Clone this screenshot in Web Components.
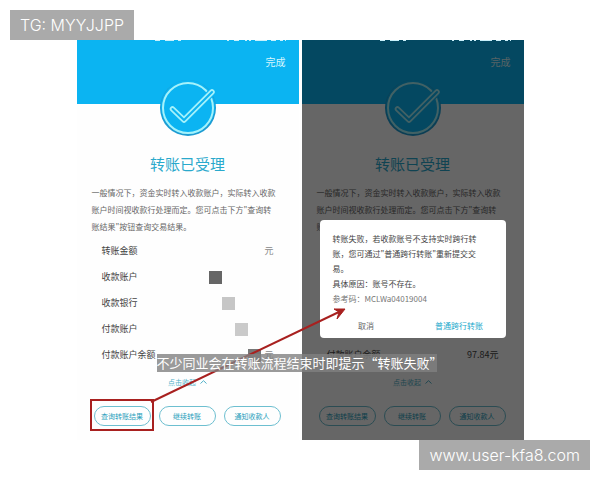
<!DOCTYPE html>
<html lang="zh-CN">
<head>
<meta charset="utf-8">
<meta name="viewport" content="width=device-width, initial-scale=1">
<title>转账已受理</title>
<style>
  body {
    margin: 0;
    background: #fff;
    font-family: "Liberation Sans", "Noto Sans CJK SC", sans-serif;
  }
</style>
</head>
<body>
<transfer-guide></transfer-guide>

<script>
/**
 * Creates a template element.
 *
 * @param {string} html - The markup and styles of the component.
 * @returns {HTMLTemplateElement} The template.
 */
const createTemplate = html => {
  const template = document.createElement('template')
  template.innerHTML = html
  return template
}

const tagTemplate = createTemplate(`
  <style>
    :host {
      display: block;
      margin: 0 10px;
      padding: 0 10px;
      background: #aaa;
      color: #fff;
      font: 300 16px/30px Inter, sans-serif;
      white-space: nowrap;
    }
  </style>
  <slot></slot>
`)

customElements.define('contact-tag',
  /**
   * Represents a contact-tag element.
   */
  class extends HTMLElement {
    /**
     * Creates an instance of the current type.
     */
    constructor () {
      super()
      this.attachShadow({ mode: 'open' }).appendChild(tagTemplate.content.cloneNode(true))
    }
  }
)

const badgeTemplate = createTemplate(`
  <style>
    :host {
      display: block;
      width: 60px;
      height: 60px;
    }
    svg {
      display: block;
    }
  </style>
  <svg width="60" height="60" viewBox="0 0 60 60" fill="none" stroke-linecap="round" stroke-linejoin="round" aria-hidden="true">
    <circle cx="30" cy="30" r="28" fill="#1e9cd2"/>
    <circle cx="30" cy="29" r="27" fill="#0bb4f2"/>
    <circle cx="30" cy="30" r="25" stroke="#a5f2fb" stroke-width="2"/>
    <path d="M46 22 54 14" stroke="#0bb4f2" stroke-width="8"/>
    <path d="M14.500 31 26 42 54 14" stroke="#a5f2fb" stroke-width="5.500"/>
    <path d="M14.500 31 26 42 54 14" stroke="#0bb4f2" stroke-width="2"/>
  </svg>
`)

customElements.define('check-badge',
  /**
   * Represents a check-badge element.
   */
  class extends HTMLElement {
    /**
     * Creates an instance of the current type.
     */
    constructor () {
      super()
      this.attachShadow({ mode: 'open' }).appendChild(badgeTemplate.content.cloneNode(true))
    }
  }
)

const rowTemplate = createTemplate(`
  <style>
    :host {
      display: flex;
      align-items: center;
      height: 26px;
      font-size: 9px;
      line-height: 26px;
      color: #444;
    }
    .label {
      flex: 1;
    }
    .value {
      color: var(--value-color, #888);
    }
    .mask {
      width: 13px;
      height: 13px;
      margin-right: var(--mask-gap, 0);
      background: var(--mask-color, transparent);
    }
  </style>
  <span class="label"><slot></slot></span>
  <span class="mask"></span>
  <span class="value"><slot name="value"></slot></span>
`)

customElements.define('detail-row',
  /**
   * Represents a detail-row element.
   */
  class extends HTMLElement {
    /**
     * Creates an instance of the current type.
     */
    constructor () {
      super()
      this.attachShadow({ mode: 'open' }).appendChild(rowTemplate.content.cloneNode(true))
    }
  }
)

const pillTemplate = createTemplate(`
  <style>
    :host {
      display: block;
      flex: 1;
    }
    button {
      box-sizing: border-box;
      width: 100%;
      height: 20px;
      padding: 0;
      border: 1px solid #6dbfd0;
      border-radius: 10px;
      background: none;
      color: #2a9fbc;
      font: 7px/18px "Noto Sans CJK SC", sans-serif;
      white-space: nowrap;
    }
  </style>
  <button type="button"><slot></slot></button>
`)

customElements.define('pill-button',
  /**
   * Represents a pill-button element.
   */
  class extends HTMLElement {
    /**
     * Creates an instance of the current type.
     */
    constructor () {
      super()
      this.attachShadow({ mode: 'open' }).appendChild(pillTemplate.content.cloneNode(true))
    }
  }
)

const phoneTemplate = createTemplate(`
  <style>
    :host {
      display: block;
      position: relative;
      padding-bottom: 14px;
      background: #fefefe;
      font-family: "Noto Sans CJK SC", sans-serif;
    }
    header {
      display: flex;
      flex-direction: column;
      align-items: flex-end;
      height: 64px;
      background: #0bb4f2;
    }
    .status {
      display: block;
      position: relative;
      z-index: 1;
      margin-right: 12px;
    }
    button {
      padding: 0;
      border: 0;
      background: none;
      font-family: inherit;
    }
    .done {
      margin: 12px 13px 0;
      color: #d8f6fd;
      font-size: 10px;
      line-height: 16px;
    }
    check-badge {
      margin: -26px auto 0;
    }
    h1 {
      margin: 15px 0 0;
      color: #2aa9cc;
      font-size: 15px;
      font-weight: 400;
      line-height: 22px;
      text-align: center;
    }
    p {
      margin: 9px 0 3px;
      color: #666;
      font-size: 8px;
      line-height: 17px;
      padding-left: 15px;
      white-space: nowrap;
    }
    .rows {
      padding: 0 25px;
    }
    .fold {
      display: flex;
      align-items: center;
      gap: 4px;
      margin: 8px auto 12px;
      color: #4fb0c8;
      font-size: 7px;
      line-height: 12px;
    }
    .actions {
      display: flex;
      gap: 8px;
      padding: 0 18px 0 17px;
    }
    .shade {
      display: none;
    }
    :host([dimmed]) .shade {
      display: flex;
      align-items: flex-start;
      position: absolute;
      inset: 0;
      padding: 180px 18px 0;
      background: rgba(0, 0, 0, .6);
    }
  </style>
  <header>
    <svg class="status" width="134" height="2" viewBox="0 0 134 2" stroke="#c9f1fc" stroke-width="2" aria-hidden="true">
      <path d="M2 0h5M12 0h9M25 0h3M74 0h2M81 0h5M92 0h2M96 0h2M102 0h12M118 0h5M127 0h3M132 0h1"/>
    </svg>
    <button class="done" type="button">完成</button>
  </header>
  <check-badge></check-badge>
  <h1>转账已受理</h1>
  <p>一般情况下，资金实时转入收款账户，实际转入收款<br>账户时间视收款行处理而定。您可点击下方"查询转<br><slot name="last-line">账结果"按钮查询交易结果。</slot></p>
  <div class="rows"><slot></slot></div>
  <button class="fold" type="button">点击收起
    <svg width="7" height="4" viewBox="0 0 7 4" fill="none" stroke="currentColor" aria-hidden="true"><path d="M.5 3.500 3.500.7 6.500 3.500"/></svg>
  </button>
  <div class="actions">
    <pill-button>查询转账结果</pill-button>
    <pill-button>继续转账</pill-button>
    <pill-button>通知收款人</pill-button>
  </div>
  <div class="shade"><slot name="dialog"></slot></div>
`)

customElements.define('phone-screen',
  /**
   * Represents a phone-screen element.
   */
  class extends HTMLElement {
    /**
     * Creates an instance of the current type.
     */
    constructor () {
      super()
      this.attachShadow({ mode: 'open' }).appendChild(phoneTemplate.content.cloneNode(true))
    }
  }
)

const dialogTemplate = createTemplate(`
  <style>
    :host {
      display: block;
      flex: 1;
      background: #fff;
      border-radius: 4px;
      color: #444;
      font-size: 8px;
      line-height: 15px;
      white-space: nowrap;
    }
    .message {
      padding: 11px 13px 0;
    }
    .code {
      color: #777;
    }
    .buttons {
      display: grid;
      grid-template-columns: 1fr 1fr;
      padding: 7px 0 1px;
    }
    button {
      height: 24px;
      padding: 0;
      border: 0;
      background: none;
      color: #666;
      font: inherit;
    }
    .primary {
      color: #1ca9cc;
    }
  </style>
  <div class="message" role="alertdialog">
    <div>转账失败，若收款账号不支持实时跨行转<br>账，您可通过"普通跨行转账"重新提交交<br>易。</div>
    <div>具体原因：账号不存在。</div>
    <div class="code">参考码：MCLWa04019004</div>
  </div>
  <div class="buttons">
    <button type="button">取消</button>
    <button class="primary" type="button">普通跨行转账</button>
  </div>
`)

customElements.define('failure-dialog',
  /**
   * Represents a failure-dialog element.
   */
  class extends HTMLElement {
    /**
     * Creates an instance of the current type.
     */
    constructor () {
      super()
      this.attachShadow({ mode: 'open' }).appendChild(dialogTemplate.content.cloneNode(true))
    }
  }
)

const guideTemplate = createTemplate(`
  <style>
    :host {
      display: flex;
      flex-direction: column;
      padding: 10px 0;
    }
    .top {
      align-self: flex-start;
    }
    .bottom {
      align-self: flex-end;
    }
    figure {
      position: relative;
      display: grid;
      grid-template-columns: 1fr 1fr;
      gap: 3px;
      width: 100%;
      max-width: 447px;
      margin: 0 auto;
    }
    .marks {
      position: absolute;
      inset: 0;
      width: 100%;
      height: 100%;
      z-index: 1;
    }
    /* The caption lies across both screens */
    figcaption {
      position: absolute;
      z-index: 1;
      top: 314px;
      left: 80px;
      width: 280px;
      background: rgba(129, 129, 129, .8);
      color: #fff;
      font: 13px/18px "Noto Sans CJK SC", sans-serif;
      white-space: nowrap;
    }
  </style>
  <contact-tag class="top">TG: MYYJJPP</contact-tag>
  <figure>
    <phone-screen>
      <detail-row>转账金额<span slot="value">元</span></detail-row>
      <detail-row style="--mask-color: #666; --mask-gap: 52px">收款账户</detail-row>
      <detail-row style="--mask-color: #c6c6c6; --mask-gap: 39px">收款银行</detail-row>
      <detail-row style="--mask-color: #cacaca; --mask-gap: 26px">付款账户</detail-row>
      <detail-row style="--mask-color: #777; --mask-gap: 3px">付款账户余额<span slot="value">元</span></detail-row>
    </phone-screen>
    <phone-screen dimmed>
      <span slot="last-line">账</span>
      <detail-row></detail-row>
      <detail-row></detail-row>
      <detail-row></detail-row>
      <detail-row></detail-row>
      <detail-row style="--value-color: #444">付款账户余额<span slot="value">97.84元</span></detail-row>
      <failure-dialog slot="dialog"></failure-dialog>
    </phone-screen>
    <svg class="marks" viewBox="0 0 447 400" fill="none" stroke="#a8201f" stroke-width="2" aria-hidden="true">
      <rect x="14" y="360" width="62" height="30"/>
      <path d="M74 362 264 271"/>
      <path d="M268 269 257 269 262 272 260 279Z" fill="#a8201f" stroke-width="1"/>
    </svg>
    <figcaption>不少同业会在转账流程结束时即提示“转账失败”</figcaption>
  </figure>
  <contact-tag class="bottom">www.user-kfa8.com</contact-tag>
`)

customElements.define('transfer-guide',
  /**
   * Represents a transfer-guide element.
   */
  class extends HTMLElement {
    /**
     * Creates an instance of the current type.
     */
    constructor () {
      super()
      this.attachShadow({ mode: 'open' }).appendChild(guideTemplate.content.cloneNode(true))
    }
  }
)
</script>
</body>
</html>
